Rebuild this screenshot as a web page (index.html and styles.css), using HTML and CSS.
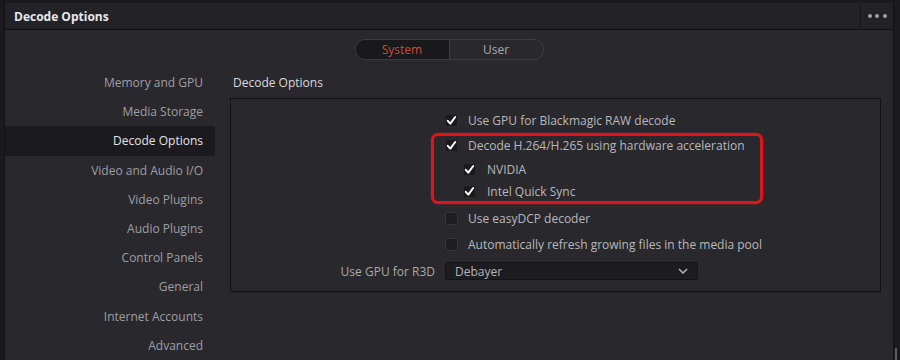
FILE: index.html
```html
<!DOCTYPE html>
<html lang="en">
<head>
<meta charset="utf-8">
<title>Decode Options</title>
<link rel="stylesheet" href="styles.css">
</head>
<body>
<div class="app">
  <header class="titlebar">
    <span class="title">Decode Options</span>
    <div class="more"><i></i><i></i><i></i></div>
  </header>
  <div class="content">
    <div class="tabs">
      <div class="seg">
        <span class="seg-item on">System</span>
        <span class="seg-item">User</span>
      </div>
    </div>
    <div class="body">
      <nav class="side">
        <div class="side-item">Memory and GPU</div>
        <div class="side-item">Media Storage</div>
        <div class="side-item active">Decode Options</div>
        <div class="side-item">Video and Audio I/O</div>
        <div class="side-item">Video Plugins</div>
        <div class="side-item">Audio Plugins</div>
        <div class="side-item">Control Panels</div>
        <div class="side-item">General</div>
        <div class="side-item">Internet Accounts</div>
        <div class="side-item">Advanced</div>
      </nav>
      <section class="pane">
        <h2 class="pane-title">Decode Options</h2>
        <div class="box">
          <div class="row">
            <span class="cb checked"><svg viewBox="0 0 13 13"><polyline points="2.8,6.8 5.3,9.6 10.2,3" /></svg></span>
            <span class="label">Use GPU for Blackmagic RAW decode</span>
          </div>
          <div class="row row-h">
            <span class="cb checked"><svg viewBox="0 0 13 13"><polyline points="2.8,6.8 5.3,9.6 10.2,3" /></svg></span>
            <span class="label">Decode H.264/H.265 using hardware acceleration</span>
          </div>
          <div class="subrows">
            <div class="row sub">
              <span class="cb checked"><svg viewBox="0 0 13 13"><polyline points="2.8,6.8 5.3,9.6 10.2,3" /></svg></span>
              <span class="label">NVIDIA</span>
            </div>
            <div class="row sub">
              <span class="cb checked"><svg viewBox="0 0 13 13"><polyline points="2.8,6.8 5.3,9.6 10.2,3" /></svg></span>
              <span class="label">Intel Quick Sync</span>
            </div>
          </div>
          <div class="row">
            <span class="cb"></span>
            <span class="label">Use easyDCP decoder</span>
          </div>
          <div class="row">
            <span class="cb"></span>
            <span class="label">Automatically refresh growing files in the media pool</span>
          </div>
          <div class="row row-select">
            <span class="field-label">Use GPU for R3D</span>
            <div class="select">
              <span>Debayer</span>
              <svg class="chev" viewBox="0 0 10 6"><polyline points="1,1 5,5 9,1" /></svg>
            </div>
          </div>
          <div class="highlight"></div>
        </div>
      </section>
    </div>
  </div>
  <div class="scroll-thumb"></div>
</div>
</body>
</html>
```
FILE: styles.css
```css
html, body {
  margin: 0;
  padding: 0;
  height: 100%;
}
body {
  background: #1b1a1e;
  font-family: "Open Sans", "Noto Sans", sans-serif;
  font-size: 12px;
  overflow: hidden;
}
.app {
  position: relative;
  margin-left: 4px;
  width: 890px;
  height: 360px;
  padding-top: 3px;
  box-sizing: border-box;
  border-left: 1px solid #111113;
  border-right: 1px solid #111113;
  background: #1b1a1e;
}
.titlebar {
  height: 26px;
  background: #232227;
  border-bottom: 1px solid #111113;
  display: flex;
  align-items: center;
  justify-content: space-between;
}
.title {
  padding-left: 9px;
  color: #e8e8ea;
  font-weight: 700;
  font-size: 12px;
  padding-top: 1px;
}
.more {
  width: 32px;
  height: 100%;
  border-left: 1px solid #141416;
  display: flex;
  align-items: center;
  justify-content: center;
  gap: 3.5px;
}
.more i {
  width: 4px;
  height: 4px;
  border-radius: 50%;
  background: #a2a2a6;
}
.content {
  background: #29282d;
  height: 330px;
}
.tabs {
  padding-top: 9px;
  display: flex;
  justify-content: center;
}
.seg {
  display: flex;
  height: 21px;
  box-sizing: border-box;
  border: 1px solid #3d3c42;
  border-radius: 10px;
  overflow: hidden;
}
.seg-item {
  width: 93px;
  line-height: 19px;
  text-align: center;
  color: #a9a9ac;
  font-size: 12px;
}
.seg-item.on {
  background: #19181b;
  color: #cd4a3f;
  border-right: 1px solid #3d3c42;
}
.body {
  display: flex;
  margin-top: 8px;
}
.side {
  width: 210px;
}
.side-item {
  height: 29.2px;
  line-height: 29.2px;
  text-align: right;
  padding-right: 12px;
  color: #9f9fa3;
}
.side-item.active {
  background: #1b1a1e;
  color: #e4e4e6;
}
.pane {
  margin-left: 15px;
  width: 651px;
}
.pane-title {
  margin: 0;
  height: 30px;
  line-height: 30px;
  padding-left: 3px;
  font-size: 12px;
  font-weight: 400;
  color: #dadadd;
}
.box {
  position: relative;
  height: 194px;
  box-sizing: border-box;
  border: 1px solid #121214;
  padding-top: 8px;
}
.row {
  display: flex;
  align-items: center;
  height: 26px;
  padding-left: 214px;
  gap: 10px;
  color: #b8b8bb;
}
.row-h {
  height: 25px;
}
.subrows {
  margin-bottom: 3px;
}
.row.sub {
  height: 22px;
  padding-left: 232px;
  gap: 11px;
}
.cb {
  width: 13px;
  height: 13px;
  box-sizing: border-box;
  border-radius: 2px;
  background: #1e1d21;
  border: 1px solid #36353a;
  flex: none;
  display: flex;
}
.cb.checked {
  background: #1a191c;
  border-color: #2a292e;
}
.cb svg {
  width: 13px;
  height: 13px;
  margin: -1px;
  fill: none;
  stroke: #ffffff;
  stroke-width: 2;
  stroke-linecap: round;
  stroke-linejoin: round;
}
.row-select {
  height: 28px;
  padding-left: 0;
  gap: 10px;
}
.field-label {
  width: 204px;
  text-align: right;
  color: #a9a9ac;
}
.select {
  width: 253px;
  height: 18px;
  box-sizing: border-box;
  background: #1d1c20;
  border: 1px solid #141416;
  border-radius: 3px;
  display: flex;
  align-items: center;
  justify-content: space-between;
  padding: 0 9px 0 9px;
  color: #b6b6b9;
}
.chev {
  width: 10px;
  height: 6px;
  fill: none;
  stroke: #b0b0b3;
  stroke-width: 1.6;
}
.highlight {
  position: absolute;
  left: 200px;
  top: 34px;
  width: 332px;
  height: 71px;
  box-sizing: border-box;
  border: 3px solid #e2141b;
  border-radius: 7px;
  box-shadow: 0 0 2px rgba(255, 30, 30, 0.5);
}
.scroll-thumb {
  position: absolute;
  right: -4px;
  top: 348px;
  width: 2px;
  height: 12px;
  background: #5d5d61;
}
```
